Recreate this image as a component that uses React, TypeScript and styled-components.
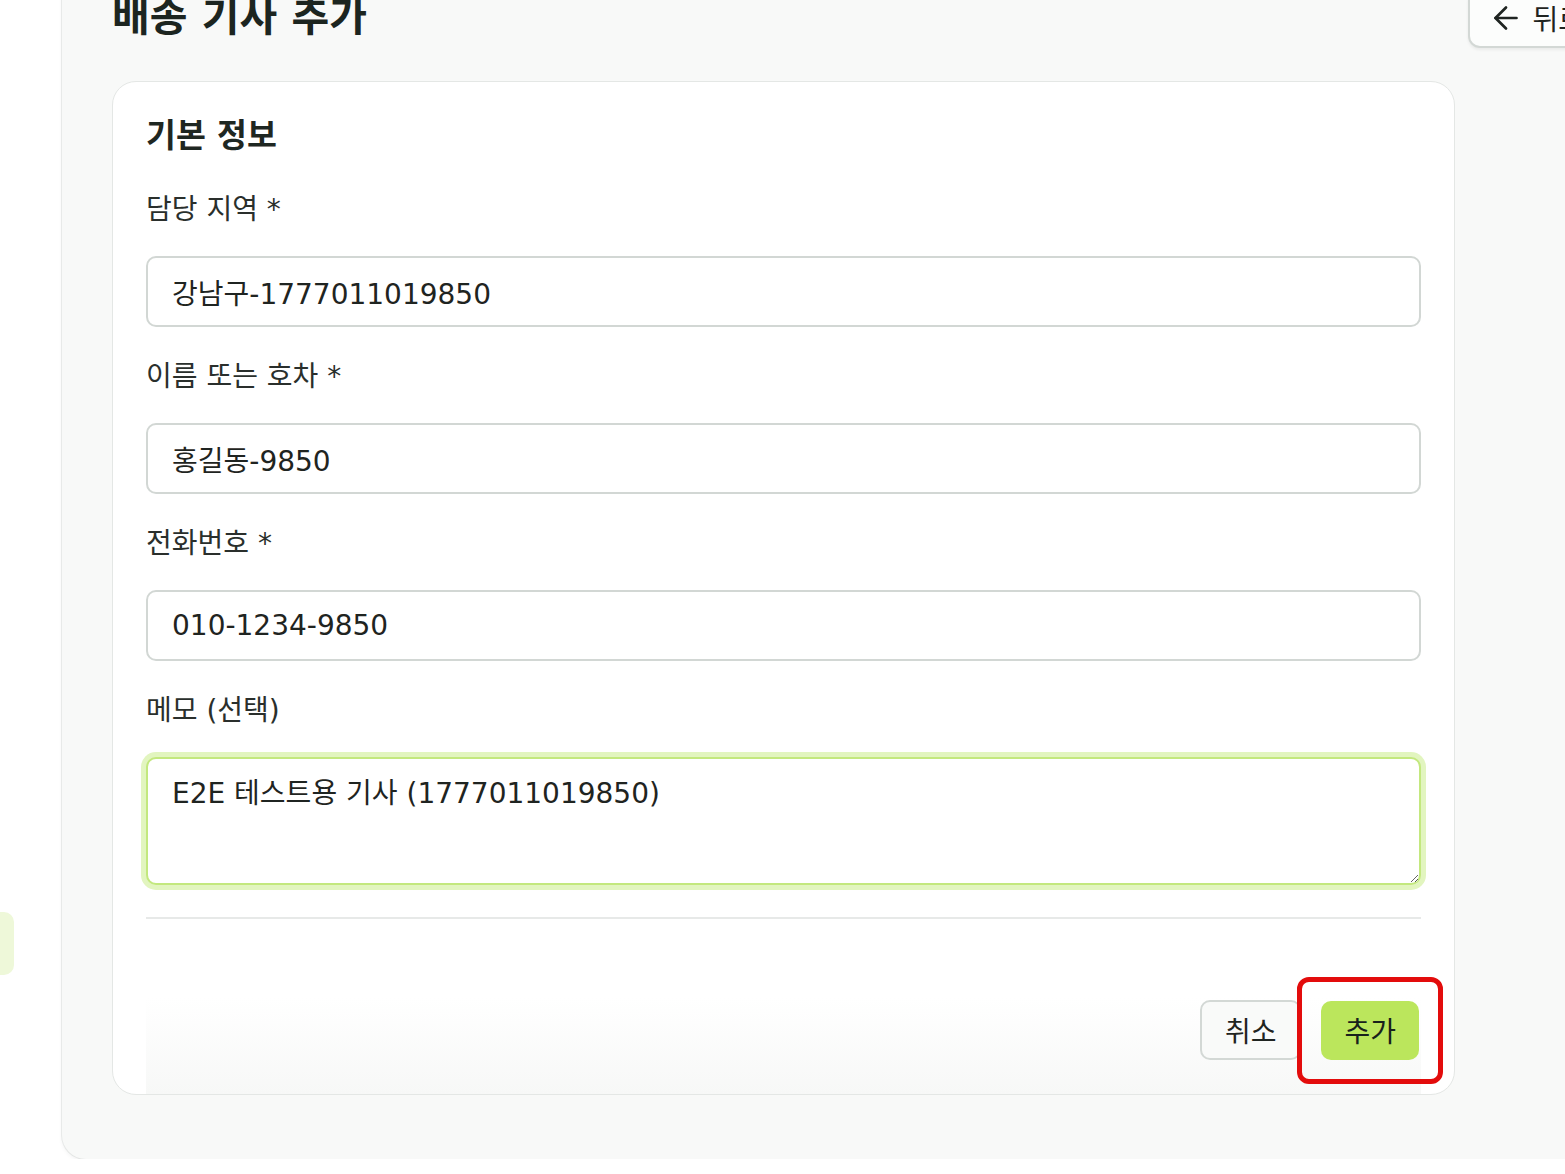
import React from "react";
import styled, { createGlobalStyle } from "styled-components";
import { ArrowLeft } from "lucide-react";

const GlobalStyle = createGlobalStyle`
    html, body {
        margin: 0;
        padding: 0;
        background: #ffffff;
        overflow: hidden;
    }
    body {
        font-family: "DejaVu Sans", "Noto Sans CJK KR", sans-serif;
        color: #1f2421;
    }
    * {
        box-sizing: border-box;
    }
`;

type Field = {
    label: string;
    value: string;
};

const fields: Field[] = [
    { label: "담당 지역 *", value: "강남구-1777011019850" },
    { label: "이름 또는 호차 *", value: "홍길동-9850" },
    { label: "전화번호 *", value: "010-1234-9850" },
];

const App: React.FunctionComponent = () => {
    return (
        <>
            <GlobalStyle />
            <Layout>
                <Sidebar>
                    <NavItem />
                </Sidebar>
                <Panel>
                    <Header>
                        <Title>배송 기사 추가</Title>
                        <BackButton type="button">
                            <ArrowLeft size={36} strokeWidth={1.8} />
                            <span>뒤로</span>
                        </BackButton>
                    </Header>
                    <Card>
                        <SectionTitle>기본 정보</SectionTitle>
                        <Fields>
                            {fields.map(field => (
                                <FieldGroup key={field.label}>
                                    <Label>{field.label}</Label>
                                    <Input defaultValue={field.value} />
                                </FieldGroup>
                            ))}
                            <FieldGroup>
                                <Label>메모 (선택)</Label>
                                <TextArea defaultValue="E2E 테스트용 기사 (1777011019850)" />
                            </FieldGroup>
                        </Fields>
                        <Footer>
                            <CancelButton type="button">취소</CancelButton>
                            <Highlight>
                                <SubmitButton type="button">추가</SubmitButton>
                            </Highlight>
                        </Footer>
                    </Card>
                </Panel>
            </Layout>
        </>
    );
};

export default App;

const Layout = styled.div`
    display: flex;
    align-items: flex-start;
    margin-top: -38px;
    width: 1700px;
`;

const Sidebar = styled.aside`
    width: 62px;
    flex: 0 0 62px;
    padding-top: 950px;
`;

const NavItem = styled.div`
    width: 14px;
    height: 63px;
    background: #eef8d9;
    border-radius: 0 10px 10px 0;
`;

const Panel = styled.main`
    width: 1600px;
    padding: 26px 50px 64px;
    background: #f8f9f8;
    border-radius: 24px;
    box-shadow: 0 2px 4px rgba(0, 0, 0, 0.06), 0 0 0 1px #eef0ef;
`;

const Header = styled.header`
    display: flex;
    align-items: center;
    justify-content: space-between;
    width: 1498px;
`;

const Title = styled.h1`
    margin: 0;
    font-size: 41px;
    line-height: 1.3;
    font-weight: 700;
    color: #1c2520;
`;

const BackButton = styled.button`
    display: flex;
    align-items: center;
    gap: 8px;
    height: 60px;
    padding: 0 24px 0 18px;
    border: 2px solid #d3d8d5;
    border-radius: 12px;
    background: #fcfdfc;
    box-shadow: 0 2px 3px rgba(0, 0, 0, 0.06);
    font-family: inherit;
    font-size: 28px;
    color: #1f2421;
`;

const Card = styled.section`
    width: 1343px;
    margin-top: 33px;
    padding: 33px 33px 0;
    background: #ffffff;
    border: 1px solid #e4e7e5;
    border-radius: 24px;
    overflow: hidden;
`;

const SectionTitle = styled.h2`
    margin: 0;
    font-size: 32.5px;
    line-height: 42px;
    font-weight: 700;
    color: #1f2722;
`;

const Fields = styled.div`
    display: flex;
    flex-direction: column;
    gap: 30px;
    margin-top: 33px;
`;

const FieldGroup = styled.div`
    display: flex;
    flex-direction: column;
    gap: 26px;
`;

const Label = styled.label`
    font-size: 28px;
    line-height: 40px;
    color: #2a2f2c;
`;

const Input = styled.input`
    height: 71px;
    padding: 0 24px;
    border: 2px solid #d2d7d4;
    border-radius: 10px;
    background: #ffffff;
    font-family: inherit;
    font-size: 28px;
    color: #1f2421;
    outline: none;
`;

const TextArea = styled.textarea`
    height: 128px;
    padding: 14px 24px;
    border: 2px solid #c3e87e;
    border-radius: 10px;
    box-shadow: 0 0 0 5px #e2f5bf;
    font-family: inherit;
    font-size: 28px;
    line-height: 42px;
    color: #1f2421;
    outline: none;
    resize: vertical;
`;

const Footer = styled.footer`
    display: flex;
    justify-content: flex-end;
    align-items: center;
    gap: 20px;
    margin-top: 32px;
    padding: 81px 2px 34px;
    border-top: 2px solid #e7e9e8;
    background: linear-gradient(to bottom, #ffffff 0%, #ffffff 45%, #f7f8f7 100%);
`;

const BaseButton = styled.button`
    height: 60px;
    padding: 0 23px;
    border-radius: 10px;
    font-family: inherit;
    font-size: 28px;
    color: #1f2421;
`;

const CancelButton = styled(BaseButton)`
    border: 2px solid #d3d8d5;
    background: #f9faf9;
`;

const SubmitButton = styled(BaseButton)`
    height: 59px;
    border: none;
    background: #bbe65c;
    color: #18211b;
`;

const Highlight = styled.div`
    position: relative;
    display: flex;

    &::after {
        content: "";
        position: absolute;
        inset: -24px;
        border: 5px solid #e30c0c;
        border-radius: 12px;
        pointer-events: none;
    }
`;
